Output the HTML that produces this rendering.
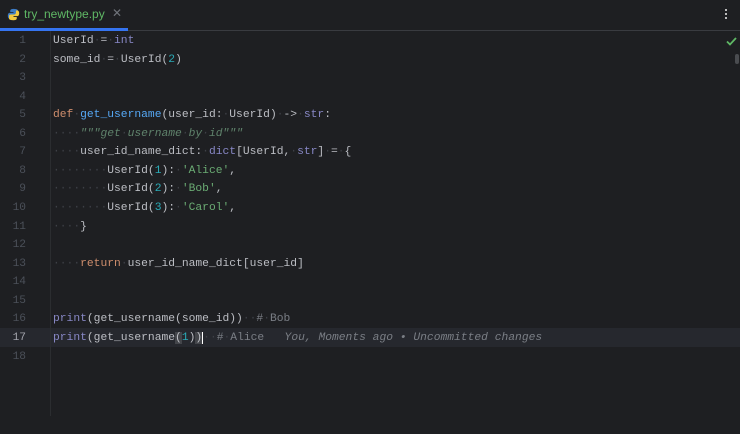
<!DOCTYPE html><html><head><style>
body{margin:0;width:740px;height:434px;background:#1e1f22;overflow:hidden;position:relative;font-family:"Liberation Mono",monospace}
.tabs{position:absolute;left:0;top:0;width:740px;height:30px;border-bottom:1px solid #393b40;background:#1e1f22}
.tab{position:absolute;left:0;top:0;width:128px;height:28px;border-bottom:3px solid #3574f0;box-sizing:content-box}
.tname{position:absolute;left:24px;top:7px;font:12px "Liberation Sans",sans-serif;color:#5fb865}
.x{position:absolute;left:112px;top:6px;color:#6f737a;font:12px "Liberation Sans",sans-serif}
.gut{position:absolute;left:50px;top:31px;width:1px;height:385px;background:#2b2d30}
.cur{position:absolute;left:0;top:328px;width:740px;height:19px;background:#26282e}
.ln{position:absolute;left:0;width:26px;text-align:right;color:#4b5059;font-size:11.2px}
.c{position:absolute;left:53px;white-space:pre;color:#bcbec4;font-size:11.3px}
.k{color:#cf8e6d}.f{color:#56a8f5}.b{color:#8888c6}.n{color:#2aacb8}.s{color:#6aab73}.cm{color:#7a7e85}.d{color:#5f826b;font-style:italic}.w{color:#3e4047}.h{color:#7a7e85;font-style:italic}
</style></head><body>
<div class="tabs"><div class="tab">
<svg style="position:absolute;left:7px;top:8px" width="13" height="13" viewBox="0 0 16 16"><path d="M8 1C4 1 4 3 4 3v2h4v1H3S1 6 1 9.5 3 13 3 13h2v-2.5S5 8 7.5 8h4S13.5 8 13.5 6V3S13.5 1 8 1z" fill="#3d7bc4"/><path d="M8 15c4 0 4-2 4-2v-2H8v-1h5s2 0 2-3.5S13 3 13 3h-2v2.5S11 8 8.5 8h-4S2.5 8 2.5 10v3S2.5 15 8 15z" fill="#f3c93f"/></svg>
<div class="tname">try_newtype.py</div><div class="x">✕</div></div>
<div style="position:absolute;left:725px;top:9px;width:2px;height:2px;background:#bbb;box-shadow:0 4px #bbb,0 8px #bbb"></div></div>
<svg style="position:absolute;left:726px;top:37px" width="11" height="9" viewBox="0 0 11 9"><path d="M1 4.5l3 3L10 1" stroke="#5fb865" stroke-width="1.8" fill="none"/></svg>
<div style="position:absolute;left:735px;top:54px;width:4px;height:10px;background:#4a4c50;border-radius:2px"></div>
<div class="cur"></div>
<div class="gut"></div>
<div id="lines"></div>
<script>
var L=[
'UserId<span class="w">·</span>=<span class="w">·</span><span class="b">int</span>',
'some_id<span class="w">·</span>=<span class="w">·</span>UserId(<span class="n">2</span>)',
'','',
'<span class="k">def</span><span class="w">·</span><span class="f">get_username</span>(user_id:<span class="w">·</span>UserId)<span class="w">·</span>-&gt;<span class="w">·</span><span class="b">str</span>:',
'<span class="w">····</span><span class="d">"""get<span class="w">·</span>username<span class="w">·</span>by<span class="w">·</span>id"""</span>',
'<span class="w">····</span>user_id_name_dict:<span class="w">·</span><span class="b">dict</span>[UserId,<span class="w">·</span><span class="b">str</span>]<span class="w">·</span>=<span class="w">·</span>{',
'<span class="w">········</span>UserId(<span class="n">1</span>):<span class="w">·</span><span class="s">\'Alice\'</span>,',
'<span class="w">········</span>UserId(<span class="n">2</span>):<span class="w">·</span><span class="s">\'Bob\'</span>,',
'<span class="w">········</span>UserId(<span class="n">3</span>):<span class="w">·</span><span class="s">\'Carol\'</span>,',
'<span class="w">····</span>}',
'',
'<span class="w">····</span><span class="k">return</span><span class="w">·</span>user_id_name_dict[user_id]',
'','',
'<span class="b">print</span>(get_username(some_id))<span class="w">··</span><span class="cm">#<span class="w">·</span>Bob</span>',
'<span class="b">print</span>(get_username<span style="background:#43454a">(</span><span class="n">1</span>)<span style="background:#43454a;border-right:1.5px solid #fff">)</span><span class="w">··</span><span class="cm">#<span class="w">·</span>Alice</span>   <span class="h">You, Moments ago • Uncommitted changes</span>',
''];
var h='';for(var i=0;i<18;i++){var t=31+i*18.56;
h+='<div class="ln" style="top:'+(t+4)+'px;'+(i==16?'color:#a1a3ab':'')+'">'+(i+1)+'</div><div class="c" style="top:'+(t+4)+'px">'+L[i]+'</div>';}
document.getElementById('lines').innerHTML=h;
</script>
</body></html>
